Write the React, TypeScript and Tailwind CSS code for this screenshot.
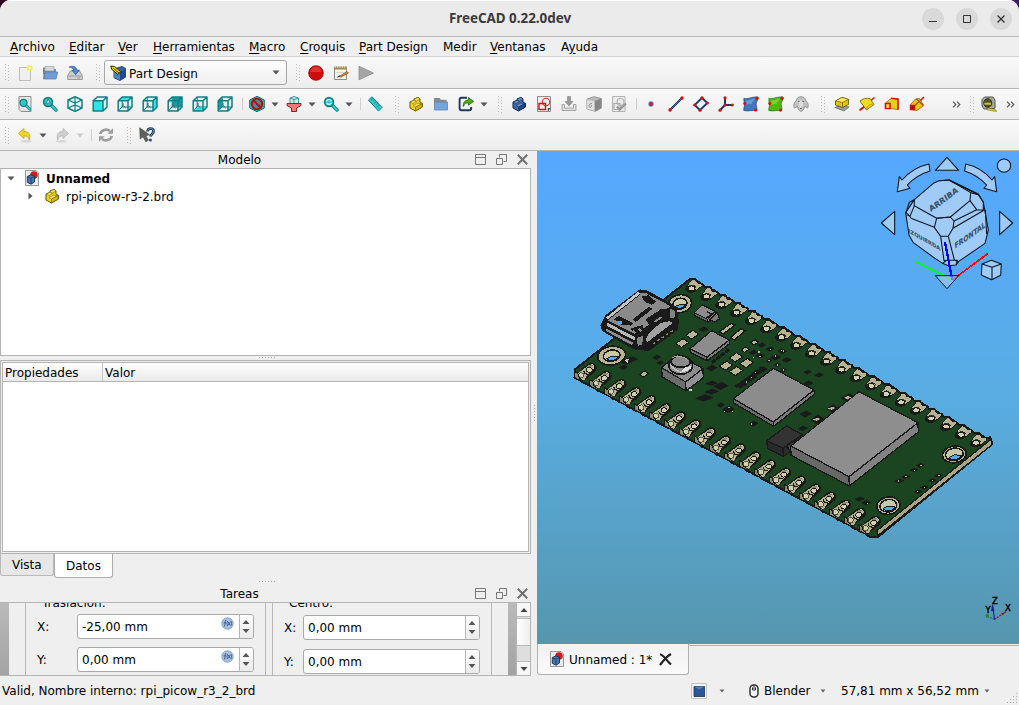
import React from "react";

const Svg = ({ children, w = 16, h = 16, vb = "0 0 16 16", className = "" }: { children: React.ReactNode; w?: number; h?: number; vb?: string; className?: string }) => (
  <svg width={w} height={h} viewBox={vb} className={"block shrink-0 " + className}>{children}</svg>
);

/* ---------- toolbar pieces ---------- */

const Dots = () => (
  <svg width="5" height="17" viewBox="0 0 5 17" className="block shrink-0" shapeRendering="crispEdges">
    {[0, 3, 6, 9, 12, 15].map((y) => (
      <g key={y} fill="#bdbdbd"><rect x="0" y={y} width="1" height="1" /><rect x="3" y={y + 1} width="1" height="1" /></g>
    ))}
  </svg>
);
const Handle = ({ className }: { className: string }) => <div className={"flex shrink-0 items-center " + className}><Dots /></div>;
const Tool = ({ children }: { children: React.ReactNode }) => <div className="flex w-[25px] shrink-0 items-center pl-[5px]">{children}</div>;
const Caret = ({ color = "#555" }: { color?: string }) => (
  <Svg w={8} h={5} vb="0 0 8 5"><path d="M.5 .5H7.5L4 4.5Z" fill={color} /></Svg>
);
const Drop = ({ color }: { color?: string }) => <div className="flex w-3 shrink-0 items-center pl-0.5"><Caret color={color} /></div>;
const Sep = ({ className = "w-[7px] pl-[5px]" }: { className?: string }) => (
  <div className={"shrink-0 " + className}><div className="h-3 w-px bg-[#cfcfcf]" /></div>
);
const More = ({ className }: { className: string }) => (
  <div className={"shrink-0 " + className}><Svg w={9} h={7} vb="0 0 9 7"><path d="M1 .7L3.8 3.5L1 6.3M5 .7L7.8 3.5L5 6.3" fill="none" stroke="#555" strokeWidth="1.2" /></Svg></div>
);

/* ---------- icons ---------- */

const NewFile = () => <Svg><path d="M2.5 2.5H13.5V15.5H2.5Z" fill="#efefef" stroke="#bdbdbd" /><circle cx="12.7" cy="3" r="3" fill="#f5ec5a" /><circle cx="12.7" cy="3" r="1.2" fill="#fffde0" /></Svg>;
const OpenFile = () => <Svg><path d="M1 2.5H6L7.5 4H14V9H1Z" fill="#8b8b8b" /><path d="M3 1.5H12V6H3Z" fill="#d8d8d8" stroke="#999" strokeWidth=".6" /><path d="M3 7H15.7L14 14H1.5Z" fill="#6f9fd2" stroke="#4a7ab5" strokeWidth=".7" /><path d="M2 5V13" stroke="#777" /></Svg>;
const SaveFile = () => <Svg><path d="M3.5 6H12.5L15.3 10.5V14.5H.7V10.5Z" fill="#cfcfcf" stroke="#8a8a8a" strokeWidth=".8" /><path d="M1.5 11H14.5M10 13H13" stroke="#999" /><path d="M2 2.2C5 .3 9.3 1 10 5H12.5L8.7 9.8L4.7 5.3H7C6.5 3.5 4.5 2.5 2 2.2Z" fill="#4f83c4" stroke="#2b5a97" strokeWidth=".6" /></Svg>;
const PartDesignIcon = () => <Svg><path d="M4 4L12 1.500L15.700 3.500V12L10 15.500L4 12.800Z" fill="#3366a8" stroke="#112a50" strokeWidth=".8" /><path d="M4 4.500L10 7V15.200L4 12.500Z" fill="#4b80c2" /><path d="M10 7L15.500 4V12L10 15.200Z" fill="#204a87" /><path d="M.8 1L4.500 1.500L10.500 6.500L8 9.500L1.800 4.500Z" fill="#e8d21b" stroke="#2f2b00" strokeWidth="1" /><path d="M3.200 3.200L9 8" stroke="#2f2b00" strokeWidth=".8" /></Svg>;
const Record = () => <Svg><circle cx="8" cy="8" r="7.3" fill="#cf0d0d" stroke="#8c0000" strokeWidth=".8" /><path d="M2.5 7A5.5 5.5 0 0 1 13.5 7Z" fill="#e33131" /></Svg>;
const MacroEdit = () => <Svg><path d="M1.5 2.5H13.5V14.5H1.5Z" fill="#f3f3ec" stroke="#8d8d85" /><path d="M1 1.5H14V4.5H1Z" fill="#9a8e5a" /><path d="M2 2H13" stroke="#e8e2c8" strokeDasharray="1 1.3" strokeWidth="1.5" /><path d="M3.5 7.5H11M3.5 12H9" stroke="#ccc" strokeWidth=".8" /><path d="M6 11.5L14 6.5L15.5 8L8 12Z" fill="#d68a3a" stroke="#6b4518" strokeWidth=".6" /><path d="M4.5 12.2L7 10.8" stroke="#222" /></Svg>;
const Play = () => <Svg><path d="M1 1.3L15.5 8L1 14.8Z" fill="#a5a5a5" stroke="#8d8d8d" strokeWidth=".8" /></Svg>;

const T = "#107f84";
const Lens = () => <g><path d="M9 9L14 14" stroke={T} strokeWidth="3.4" strokeLinecap="round" /><path d="M9 9L14 14" stroke="#2fd5d8" strokeWidth="1.7" strokeLinecap="round" /><circle cx="6" cy="6" r="4.4" fill="#2fc9cc" stroke={T} strokeWidth="1.6" /></g>;
const FitAll = () => <Svg><path d="M2 .5H14V15.5H4L2 13.5Z" fill="#e4e4e4" stroke="#8e8e8e" /><g transform="translate(1.7 2) scale(.8)"><Lens /></g></Svg>;
const FitSel = () => <Svg><Lens /><path d="M3.8 8L6.2 3.4L8.5 6.7Z" fill="#c5e5e6" stroke="#23696c" strokeWidth=".7" /></Svg>;
const ZoomBorder = () => <Svg><Lens /><path d="M3.3 5.3A2.8 2.8 0 0 1 8.5 5.2M8.6 6.7A2.8 2.8 0 0 1 3.6 7" fill="none" stroke="#dff" strokeWidth="1.1" /></Svg>;
const IsoCube = () => <Svg><path d="M8 .8L15 4V12L8 15.4L1 12V4Z" fill="#e9f4f4" stroke={T} strokeWidth="1.5" strokeLinejoin="round" /><path d="M1 4L8 7L15 4M8 7V15M1 12L8 9L15 12M8 1V7" fill="none" stroke={T} strokeWidth="1.2" /></Svg>;
const faces: Record<string, string> = {
  front: "M1.2 4.8H11V15H1.2Z",
  top: "M1.2 4.8L5.2 1H15L11 4.8Z",
  right: "M11 4.8L15 1V11L11 15Z",
  rear: "M5.2 1H15V11H5.2Z",
  bottom: "M1.2 15L5.2 11H15L11 15Z",
  left: "M1.2 4.8L5.2 1V11L1.2 15Z",
};
const ViewCube = ({ face }: { face: string }) => (
  <Svg>
    <path d="M1.2 4.8L5.2 1H15V11L11 15H1.2Z" fill="#e4efef" />
    {face !== "front" && <path d="M5.2 1V11H15M5.2 11L1.2 15" fill="none" stroke={T} strokeWidth="1" />}
    <path d={faces[face]} fill={face === "left" || face === "rear" ? "#169ca0" : "#30e2e4"} />
    <path d="M1.2 4.8H11V15H1.2ZM1.2 4.8L5.2 1H15V11L11 15M11 4.8L15 1" fill="none" stroke={T} strokeWidth="1.5" strokeLinejoin="round" />
    {face !== "front" && <path d="M3.500 12.500L6 9.500L8.700 12M6 9.500V7" fill="none" stroke="#2d6d70" strokeWidth="1" />}
  </Svg>
);
const DrawStyle = () => <Svg><path d="M8 .3L15.3 4V12L8 15.7L.7 12V4Z" fill="#26c6c9" stroke="#0e6d70" /><circle cx="8" cy="8" r="5.2" fill="#48686a" fillOpacity=".5" stroke="#b50d0d" strokeWidth="2" /><path d="M4.5 4.5L11.5 11.5" stroke="#b50d0d" strokeWidth="2.2" /></Svg>;
const Filter = () => <Svg><path d="M4 2L8 .5L12.500 2V7.500H4Z" fill="#c9eded" stroke="#3d9599" strokeWidth="1" /><path d="M4 2L8 3.500L12.500 2M8 3.500V7" fill="none" stroke="#3d9599" strokeWidth="1" /><path d="M1 7.500H15V9.500L10.500 12V15.500H5.500V12L1 9.500Z" fill="#f47878" stroke="#7d1717" strokeWidth=".9" /></Svg>;
const Ruler = () => <Svg><path d="M5 .800L15 11.500L11.500 15L1.500 4.200Z" fill="#29cbd0" stroke={T} /><path d="M5.800 2.500L4 4.200M7.500 4L6.300 5.200M9 5.800L7.300 7.500M10.700 7.300L9.500 8.500M12.300 9L10.500 10.800" stroke="#11676b" strokeWidth=".8" /></Svg>;

const PartShape = ({ a, b, c, s }: { a: string; b: string; c: string; s: string }) => (
  <Svg>
    <path d="M2 6L6 4.200V3L10 1.300L12 3V6L14.500 7.500V11L7.500 15L2 12Z" fill={b} stroke={s} strokeWidth="1" strokeLinejoin="round" />
    <path d="M2.300 6L6 4.300L8.300 5.700L5 7.500ZM6 3.200L10 1.500L12 3.200L8.300 5ZM5 9.500L9.500 7.300L14.200 7.500L7.500 11Z" fill={a} stroke={s} strokeWidth=".5" />
    <path d="M7.500 11L14.200 7.500V11L7.500 14.800Z" fill={c} stroke={s} strokeWidth=".6" />
  </Svg>
);
const YellowPart = () => <PartShape a="#fbea62" b="#eed01c" c="#d9b60e" s="#665a06" />;
const BluePart = () => <PartShape a="#6d9bd0" b="#3b6dab" c="#204a87" s="#11264a" />;
const Folder = () => <Svg><path d="M1 2H6.500L8 3.700H13.500V9H1Z" fill="#8a8a8a" /><path d="M1.500 6H14.500V14H1.500Z" fill="#74a5dc" stroke="#5a86bb" strokeWidth=".8" /></Svg>;
const LinkIcon = () => <Svg><path d="M9 1.800H3.500A2 2 0 0 0 1.600 3.800V12.400A2 2 0 0 0 3.500 14.300H11.300A2 2 0 0 0 13.200 12.400V11" fill="none" stroke="#1e3a5e" strokeWidth="1.900" /><path d="M5.300 10.500C5 6 7.500 4 10.500 4V1.500L15.500 5.400L10.500 9.200V6.800C8 6.800 6.500 7.500 5.300 10.500Z" fill="#4cb014" stroke="#245d06" strokeWidth=".8" /></Svg>;
const SketchIcon = () => <Svg><path d="M1.500 .500H14.500V15.500H1.500Z" fill="#f1f1f1" stroke="#8e8e8e" /><circle cx="10" cy="6" r="3.700" fill="none" stroke="#e32626" strokeWidth="1.100" /><path d="M3 7.500H9.500V13.500H3Z" fill="none" stroke="#d40f0f" strokeWidth="1.400" /><path d="M12 15V12.500H14.500" fill="#333" stroke="#333" strokeWidth=".6" /></Svg>;
const ImportIcon = () => <Svg><path d="M1 8.500V14.500H15V8.500H12.500V12H3.500V8.500Z" fill="#ddd" stroke="#a6a6a6" /><path d="M6.500 .500H9.500V5.500H12L8 10L4 5.500H6.500Z" fill="#999" stroke="#858585" strokeWidth=".6" /></Svg>;
const GreyBox = () => <Svg><path d="M1 3L8 .700L15.300 2.500V12L9.500 15.300L1 13Z" fill="#bdbdbd" stroke="#888" strokeWidth=".8" /><path d="M8.500 5L15.300 2.500V12L9 15.300Z" fill="#858585" /><path d="M1 3.500L8.500 5.200V15L1 13Z" fill="#e1e1e1" stroke="#aaa" strokeWidth=".6" strokeDasharray="1.5 1" /><path d="M6 7.500C3 6.500 2.500 11.500 4 11.500S6.500 9 4.500 9" fill="none" stroke="#8e8e8e" /></Svg>;
const GreySketch = () => <Svg><path d="M1.500 .500H14V15.500H1.500Z" fill="#ececec" stroke="#b2b2b2" /><circle cx="9.500" cy="6" r="3.600" fill="none" stroke="#aaa" /><path d="M3 7.500H9V13.500H3Z" fill="none" stroke="#aaa" strokeWidth="1.200" /><path d="M6 10.500L8.700 13.500L15 7.500" fill="none" stroke="#999" strokeWidth="2.400" /></Svg>;
const PointIcon = () => <Svg><circle cx="8" cy="8" r="2.700" fill="#6a7cb5" /><circle cx="8" cy="8" r="1.700" fill="#d0162a" /></Svg>;
const red = "#d41212";
const LineIcon = () => <Svg><path d="M2 14L14 2" stroke="#16335c" strokeWidth="2.200" /><path d="M2 14L14 2" stroke="#4674ad" strokeWidth=".8" /><circle cx="2" cy="14" r="1.700" fill={red} /><circle cx="14" cy="2" r="1.700" fill={red} /></Svg>;
const PlaneIcon = () => <Svg><path d="M9 1.800L14.300 7L7 14.200L1.700 9Z" fill="#edf1f5" stroke="#173a68" strokeWidth="1.900" /><g fill={red}><circle cx="9" cy="1.800" r="1.600" /><circle cx="14.300" cy="7" r="1.600" /><circle cx="7" cy="14.200" r="1.600" /><circle cx="1.700" cy="9" r="1.600" /></g></Svg>;
const AxesIcon = () => <Svg><path d="M7 1.800V9L14.300 9M7 9L2 14.200" fill="none" stroke="#173a68" strokeWidth="2" /><g fill={red}><circle cx="7" cy="1.800" r="1.600" /><circle cx="14.300" cy="9" r="1.600" /><circle cx="7" cy="9" r="1.500" /><circle cx="2" cy="14.200" r="1.600" /></g></Svg>;
const Blob = ({ c, s, l }: { c: string; s: string; l: string }) => <Svg><path d="M.800 2.500C5 3.500 8 .5 15 1C15.300 5 12.500 6 13.200 9C13.500 11 14.500 12.500 13.300 15C9.500 13.500 5 15.800 .800 14.500C.500 11.500 2.200 10 1.200 7.500Z" fill={c} stroke={s} strokeWidth=".7" /><path d="M3 4.500C7 5 9 2.500 13 2.500C11 4.500 9 5 8.500 8C7 7.500 5 8 3.500 9Z" fill={l} opacity=".5" /><g fill={red}><circle cx="14" cy="2.200" r="1.700" /><circle cx="1.800" cy="7.500" r="1.500" /><circle cx="12.600" cy="14" r="1.600" /></g></Svg>;
const Sheep = () => <Svg><path d="M8 .800C12 .800 12.300 3.500 13 5C15.500 7 15.500 10 14.800 12L11.500 10.500C11 13.500 9.500 15.300 8 15.300S5 13.500 4.500 10.500L1.200 12C.500 10 .500 7 3 5C3.700 3.500 4 .800 8 .800Z" fill="#c2c2c2" stroke="#8f8f8f" strokeWidth=".9" /><path d="M5 5.500H7M9 5.500H11M7 12.500H9" stroke="#777" /><ellipse cx="8" cy="8" rx="2" ry="3.500" fill="#dedede" /></Svg>;
const Pad = () => <Svg><path d="M.800 11.500L6 9.500L15.200 11L10 15Z" fill="#9a9d9f" stroke="#606567" strokeWidth=".7" /><path d="M1.500 5L8 1.300L14.500 3.500V8.500L8.500 11.500L1.500 9Z" fill="#e2c40e" stroke="#5d5003" strokeWidth=".8" /><path d="M1.500 5L8 1.300L14.500 3.500L8.500 6.500Z" fill="#fbe855" stroke="#5d5003" strokeWidth=".6" /><path d="M8.500 6.500V11.500" stroke="#5d5003" strokeWidth=".7" /></Svg>;
const Revolve = () => <Svg><path d="M.500 14.500L15.500 1.500" stroke={red} strokeWidth="1.500" /><path d="M1 5C4 2.500 7 2 11 2.500L15 8.500C14 9.500 12 10.500 7.500 14Z" fill="#f4d91c" stroke="#6e5d04" strokeWidth=".8" /><path d="M7.500 13.500C8 9.500 11.500 7.500 15 8.500" fill="none" stroke="#b49406" /><path d="M1 14L5 11" stroke={red} strokeWidth="1.800" /></Svg>;
const Loft = () => <Svg><path d="M1.500 7L7 2.500H14V13.500L6.500 12.500Z" fill="#edcf1b" stroke="#6e5d04" strokeWidth=".7" /><path d="M7 2.300L14 3.200V13.800" fill="none" stroke={red} strokeWidth="1.500" /><path d="M1.500 7.500H6V12.500H1.500Z" fill="#f7e24a" stroke={red} strokeWidth="1.600" /></Svg>;
const Sweep = () => <Svg><path d="M1.500 8.500L6.500 3L10.500 2.500L14.800 9.500L8 14.500L1.500 13.500Z" fill="#edc41b" stroke="#6b5903" strokeWidth=".7" /><path d="M7 3L10 5L14 9.500M6 9.500L10.500 5" fill="none" stroke="#9a5b03" strokeWidth="1.200" /><path d="M1.500 9.500H5.500V13.500H1.500Z" fill="#8c1111" stroke={red} strokeWidth="1.400" /><path d="M11.500 4.500L15 1" stroke={red} strokeWidth="1.600" /></Svg>;
const Tape = () => <Svg><path d="M1 3.500L3.500 1H12L14 4V12L11 13H3L1 10Z" fill="#a7a9a4" stroke="#53554f" /><ellipse cx="6.800" cy="7" rx="4" ry="4.300" fill="#55521e" stroke="#2e2f25" /><path d="M3.300 6.800H10V8.800H3.500Z" fill="#cfc038" /><path d="M7 12L14.800 13.700L15.500 15.500L12 15L6 13.700Z" fill="#ded336" stroke="#625c08" strokeWidth=".5" /></Svg>;
const Undo = ({ flip = false }: { flip?: boolean }) => <Svg><g transform={flip ? "translate(16 0) scale(-1 1)" : ""}><ellipse cx="9" cy="14.300" rx="5.500" ry="1.200" fill="#000" opacity=".1" /><path d="M1.500 6.500L7 1.500V4.500C11.500 4.500 14 7 12.300 13C11.500 9.800 10 8.800 7 8.800V11.500Z" fill={flip ? "#cfcfcf" : "#f0d62b"} stroke={flip ? "#b5b5b5" : "#c3a409"} strokeWidth=".8" /></g></Svg>;
const Refresh = () => <Svg><path d="M2.200 7A6 5.500 0 0 1 12 4" fill="none" stroke="#9d9d9d" strokeWidth="2.600" /><path d="M9.500 6.800H15V1.300Z" fill="#9d9d9d" /><path d="M13.800 9A6 5.500 0 0 1 4 12" fill="none" stroke="#9d9d9d" strokeWidth="2.600" /><path d="M6.500 9.200H1V14.700Z" fill="#9d9d9d" /></Svg>;
const WhatsThis = () => <Svg><path d="M8.500 4.500C8.700 .500 15 .500 14.500 4.500C14.200 7 11.800 7 11.500 9.500" fill="none" stroke="#223f68" strokeWidth="2.700" /><path d="M8.500 4.500C8.700 .500 15 .500 14.500 4.500C14.200 7 11.800 7 11.500 9.500" fill="none" stroke="#698bb8" strokeWidth="1" /><circle cx="11.400" cy="13" r="1.600" fill="#315684" /><path d="M.700 .700L1.200 12L4 9.800L6.800 14.700L9.300 13.300L6.800 8.700L10.500 7.800Z" fill="#5e625e" stroke="#414441" strokeWidth=".6" /></Svg>;
const DocIcon = () => <Svg><path d="M1.500 .500H12L14.500 3V15.500H1.500Z" fill="#ececec" stroke="#989898" /><circle cx="10" cy="5" r="3.800" fill="#d21c1c" /><path d="M3.300 6.500L7 4.800L10.500 6.300V12L7 14.200L3.300 12.300Z" fill="#4a76ae" stroke="#15305a" strokeWidth=".9" /><path d="M3.300 6.800L7 8.300L10.500 6.500M7 8.300V14" fill="none" stroke="#15305a" strokeWidth=".7" /></Svg>;
const DockBtns = () => (
  <div className="flex items-center gap-[10px]">
    <Svg w={11} h={11} vb="0 0 11 11"><path d="M.500 .500H10.500V10.500H.500ZM.500 3.500H10.500" fill="none" stroke="#777" /></Svg>
    <Svg w={11} h={11} vb="0 0 11 11"><path d="M3.500 3.500V.500H10.500V7.500H7.500M.500 4.500H6.500V10.500H.500Z" fill="none" stroke="#777" /></Svg>
    <Svg w={11} h={11} vb="0 0 11 11"><path d="M.800 .800L10.200 10.200M10.200 .800L.800 10.200" fill="none" stroke="#6f6f6f" strokeWidth="2" /></Svg>
  </div>
);

/* ---------- 3D scene: circuit board ---------- */

const K = "#1a1a1a", G = "#1b4521", B = "#b8b393", L = "#d2d2ae";
const idx = Array.from({ length: 20 }, (_, i) => i);
const topC = idx.map((i) => [380 + i * 44.9, 52 + i * 24.4]);
const botC = idx.map((i) => [72 + i * 44.9, 299 + i * 24.15]);
const outline = [
  [30, 298], [375, 27],
  ...topC.flatMap(([x, y]) => [[x - 6, y - 26], [x + 10, y - 26], [x + 19, y - 14], [x + 31, y - 11]]),
  [1276, 502], [1282, 522], [940, 800],
  ...[...botC].reverse().flatMap(([x, y]) => [[x - 6, y + 44], [x - 20, y + 38], [x - 26, y + 32], [x - 44, y + 24]]),
  [30, 318],
].map((p) => p.join(",")).join(" ");
const rot = (n: number[][]) => n.map((p) => p.join(",")).join(" ");

const Slab = ({ p, d, top = "#8c8c8c", l = "#6d6d6d", r = "#7d7d7d" }: { p: number[][]; d: number; top?: string; l?: string; r?: string }) => {
  const dn = (q: number[]) => [q[0] + 1, q[1] + d];
  return (
    <g stroke={K} strokeWidth="4" strokeLinejoin="round">
      <polygon points={rot([p[3], p[2], dn(p[2]), dn(p[3])])} fill={l} />
      <polygon points={rot([p[2], p[1], dn(p[1]), dn(p[2])])} fill={r} />
      <polygon points={rot(p)} fill={top} />
    </g>
  );
};
const Hole = ({ x, y, rx, ry, k }: { x: number; y: number; rx: number; ry: number; k: number }) => (
  <g transform={`rotate(-8 ${x} ${y})`}>
    <ellipse cx={x} cy={y} rx={rx} ry={ry} fill={B} stroke={K} strokeWidth="5" />
    <ellipse cx={x} cy={y} rx={rx * k} ry={ry * k} fill="#c9c8a6" stroke={K} strokeWidth="4.5" />
    <path d={`M${x - rx * k * 0.7} ${y + ry * k * 0.4}Q${x} ${y - ry * k * 0.15} ${x + rx * k * 0.8} ${y + ry * k * 0.3}Q${x} ${y + ry * k * 1.4} ${x - rx * k * 0.7} ${y + ry * k * 0.4}Z`} fill="#58a9e4" stroke={K} strokeWidth="3" />
  </g>
);
const flatPads: number[][] = [
  [382, 194, 20, 13], [352, 219, 20, 13], [513, 262, 20, 14], [545, 279, 20, 14], [483, 287, 20, 14], [513, 303, 20, 14],
  [568, 217, 12, 8], [540, 239, 12, 8], [237, 312, 13, 9],
];
const specks: number[][] = [
  [415, 178, 14, 7], [590, 225, 12, 7], [615, 237, 12, 7], [650, 243, 12, 7], [585, 257, 14, 7], [632, 262, 16, 9], [665, 270, 14, 7],
  [612, 272, 9, 6], [637, 284, 9, 6], [655, 300, 9, 6], [565, 247, 12, 7], [275, 262, 12, 7], [285, 278, 10, 6], [440, 294, 16, 9],
  [440, 340, 18, 7], [468, 348, 22, 11], [440, 365, 20, 8], [418, 384, 26, 10], [467, 405, 11, 7], [490, 418, 18, 10], [566, 461, 13, 8],
  [528, 345, 18, 9], [545, 333, 16, 8], [560, 322, 16, 9], [575, 308, 16, 9], [595, 298, 12, 8], [185, 275, 18, 9], [200, 268, 18, 8], [175, 292, 12, 7],
  [728, 306, 12, 6], [762, 315, 14, 6], [730, 340, 14, 7], [722, 432, 18, 9], [714, 475, 14, 7],
  [655, 245, 10, 6], [850, 383, 22, 12], [802, 415, 17, 12], [757, 448, 20, 14], [884, 687, 14, 6], [904, 698, 14, 7],
  [1003, 633, 14, 6], [1022, 620, 12, 6], [1047, 600, 12, 6], [1066, 586, 12, 6], [1060, 665, 12, 6], [1078, 652, 12, 6], [1103, 631, 12, 6], [1120, 617, 12, 6],
];
const glints: number[][] = [
  [617, 238], [650, 241], [632, 258], [612, 272], [582, 246], [566, 262], [585, 259], [637, 285], [655, 300], [478, 425], [492, 412], [502, 424], [560, 462],
  [572, 308], [560, 322], [545, 336], [1001, 633], [1023, 619], [1049, 601], [1068, 586], [1058, 665], [1079, 652], [1102, 631], [1122, 616], [655, 243], [428, 158], [907, 700],
];
const quad = ([x, y, w, h]: number[], s = 1) => rot([[x - w * s, y + h * 0.1 * s], [x + w * 0.1 * s, y - h * s], [x + w * s, y - h * 0.1 * s], [x - w * 0.1 * s, y + h * s]]);

const Board = () => (
  <g transform="translate(565 270) scale(.33333)" shapeRendering="crispEdges">
    <polygon points={outline} fill={G} stroke={K} strokeWidth="6" strokeLinejoin="round" />
    <polygon points="1278,508 1281,524 938,797 936,782" fill="#a9a585" stroke={K} strokeWidth="4" />
    {topC.map(([x, y], i) => (
      <g key={i} transform={`translate(${x} ${y})`}>
        <ellipse cx="0" cy="3" rx="20" ry="13" fill={K} transform="rotate(-12)" />
        <path d="M-14 -4L2 -24L12 -22L17 -13L30 -12L32 -5L14 9Z" fill={B} stroke={K} strokeWidth="3" />
        <path d="M12 -22L17 -13L30 -12L22 -20Z" fill={K} />
        <path d="M-14 2Q0 -14 14 0Z" fill={B} stroke={K} strokeWidth="2.5" />
        <ellipse cx="0" cy="3" rx="10" ry="7.500" fill={L} stroke={K} strokeWidth="3" />
      </g>
    ))}
    {botC.map(([x, y], i) => (
      <g key={i} transform={`translate(${x} ${y})`}>
        <path d="M-43 6L-19 20V36L-42 25Z" fill="#8b8870" stroke={K} strokeWidth="3.500" />
        <path d="M-18 15L7 -5" stroke={K} strokeWidth="32" strokeLinecap="round" />
        <path d="M-35 10L-18 -2L8 6L-6 20L-14 34L-24 30V20Z" fill={B} stroke={K} strokeWidth="2.500" />
        <path d="M-14 6L8 -8" stroke={B} strokeWidth="16" strokeLinecap="round" />
        <path d="M-8 -8Q2 -18 12 -12L4 -4Z" fill="#8b8870" />
        <ellipse cx="1" cy="1" rx="9" ry="7.500" fill={L} stroke={K} strokeWidth="3" />
        <path d="M-16 3L-12 12L-1 14" stroke={K} strokeWidth="3.500" fill="none" />
        <ellipse cx="-23" cy="17" rx="8" ry="8" fill={L} stroke={K} strokeWidth="2" />
      </g>
    ))}
    <Hole x={140} y={257} rx={42} ry={28} k={0.6} />
    <Hole x={345} y={101} rx={35} ry={27} k={0.6} />
    <Hole x={1168} y={553} rx={36} ry={25} k={0.74} />
    <Hole x={970} y={707} rx={35} ry={26} k={0.72} />
    {flatPads.map((p, i) => <polygon key={i} points={quad(p)} fill={B} stroke={K} strokeWidth="3.500" />)}
    <polygon points="463,185 498,160 510,165 475,192" fill={B} stroke={K} strokeWidth="4" />
    <polygon points="495,204 528,176 541,182 508,210" fill={B} stroke={K} strokeWidth="4" />
    {specks.map((p, i) => <polygon key={i} points={quad(p)} fill={K} stroke={K} strokeWidth="2" strokeLinejoin="round" />)}
    {glints.map(([x, y], i) => <rect key={i} x={x - 2} y={y - 2} width="4" height="4" fill="#b5b292" />)}
    {[[850, 383], [802, 415], [757, 448]].map((p, i) => <polygon key={i} points={quad([p[0] - 2, p[1], 13, 6])} fill={B} stroke={K} strokeWidth="2" />)}
    <path d="M512 352L592 290" stroke={K} strokeWidth="7" strokeDasharray="10 5" />
    <path d="M440 278L492 238" stroke={K} strokeWidth="10" strokeDasharray="14 3" />

    {/* USB connector */}
    <path d="M225 60L246 63L333 112L340 155L336 178L250 241L205 236L114 182L108 166L122 138Z" fill={K} stroke={K} strokeWidth="4" />
    <path d="M222 68L240 68L316 108L232 180L205 190L126 150Z" fill="#8a8a8a" />
    <path d="M124 142L218 66L226 70L130 150Z" fill="#c4c4c4" />
    <path d="M126 156L212 201L209 213L124 168Z" fill="#b7b7b7" stroke={K} strokeWidth="3" />
    <path d="M122 173L205 217L203 228L120 183Z" fill="#8d8d8d" stroke={K} strokeWidth="3" />
    <path d="M130 148L224 74" stroke={K} strokeWidth="3" />
    <path d="M203 148L252 110L262 117L212 156ZM145 148L162 138L206 160L198 168ZM230 80L250 76L274 96L260 104L240 96ZM242 148L290 116L312 118L252 165ZM196 176L232 165L240 185L214 198Z" fill={K} />
    <path d="M252 138L262 131M226 160L238 152M268 156L290 141M204 182L212 190M222 176L230 184M270 126L282 118" stroke="#8a8a8a" strokeWidth="6" />
    <path d="M155 152L178 152L186 164L170 164Z" fill={K} />
    <rect x="158" y="154" width="14" height="7" fill="#58a9e4" />
    <path d="M240 212Q246 184 288 158Q322 146 324 160L262 206L248 218Z" fill="#a0a0a0" stroke={K} strokeWidth="3" />
    <path d="M316 116L330 123L328 146L314 142ZM216 204L234 198L232 224L218 228Z" fill="#838383" />
    <path d="M262 230L328 184" stroke={K} strokeWidth="9" strokeDasharray="7 7" />
    <path d="M264 222L326 180" stroke="#8c8969" strokeWidth="4" strokeDasharray="8 8" />
    <path d="M180 270L192 266L188 280Z" fill="#c9c9c9" />

    <Slab p={[[412, 104], [450, 124], [428, 148], [388, 128]]} d={9} />
    <path d="M434 150L456 128L464 146L450 156Z" fill="#7a7a7a" stroke={K} strokeWidth="4" />
    <path d="M426 126L440 132L424 144" fill="none" stroke={K} strokeWidth="4" />
    <Slab p={[[440, 182], [493, 210], [425, 262], [375, 236]]} d={11} />

    {/* push button */}
    <Slab p={[[338, 252], [414, 296], [362, 336], [290, 293]]} d={27} r="#929292" />
    <ellipse cx="347" cy="286" rx="36" ry="27" fill="#8c8c8c" stroke={K} strokeWidth="5" />
    <path d="M345 308Q378 304 380 288L360 292Z" fill="#dedede" />
    <path d="M316 282Q326 304 352 306" fill="none" stroke="#b8b8b8" strokeWidth="5" />
    <ellipse cx="347" cy="275" rx="29" ry="17" fill="#8a8a8a" stroke={K} strokeWidth="5" />
    <path d="M322 262Q350 252 370 272" fill="none" stroke="#a8a8a8" strokeWidth="3" />
    <rect x="372" y="356" width="9" height="6" fill={L} />

    <Slab p={[[625, 295], [747, 360], [625, 456], [505, 386]]} d={13} />
    <Slab p={[[664, 468], [712, 494], [654, 535], [606, 512]]} d={24} top="#333" l="#2a2a2a" r="#2d2d2d" />
    <path d="M664 528L690 510L694 526L674 540Z" fill="#444" stroke={K} strokeWidth="5" />
    <Slab p={[[882, 365], [1059, 458], [852, 620], [677, 528]]} d={28} top="#8e8e8e" l="#686868" r="#828282" />
  </g>
);

const NavCube = () => (
  <g transform="translate(870 150) scale(.33333)">
    <g fill="#a0cbf6" stroke="#0a1420" strokeWidth="3.200" strokeLinejoin="round">
      <polygon points="231,22 266,61 196,61" />
      <polygon points="74,184 74,254 34,219" />
      <polygon points="389,184 389,254 428,219" />
      <circle cx="402" cy="47" r="20" />
      <path d="M177 42L180 63Q140 75 112 105L120 115L82 125L88 80L96 90Q130 52 177 42Z" />
      <path d="M287 42L284 63Q322 75 350 105L342 115L380 125L374 80L366 90Q334 52 287 42Z" />
      <path d="M207 92L238 90L325 132L340 157L355 240L345 280L265 335L258 345L235 347L218 340L195 325L130 278L117 255L107 188L133 149L190 100Z" />
      <g fill="none">
        <path d="M207 92L238 90L302 128L300 152L241 201L200 205L133 167V149" />
        <path d="M200 205L241 201L252 213L249 235L235 259L212 259L193 232Z" />
        <path d="M133 149L118 157L108 188L120 199L133 167M120 199L123 205L193 232M112 195L120 199" />
        <path d="M302 128L325 134L340 157V180L320 179L300 152M252 213L320 179M249 235L343 180" />
        <path d="M212 259L222 332L240 330M235 259L253 330L266 335M218 340L230 331H262L258 345M240 92L325 134M346 180L350 252" />
      </g>
      <polygon points="336,342 364,331 394,342 392,376 365,389 334,375" />
      <path d="M336,342L366,352L394,342M366,352V388" fill="none" />
    </g>
    <g fill="#2c4257" stroke="#2c4257" strokeWidth=".4" fillOpacity=".9" fontFamily="DejaVu Sans" fontWeight="bold" textAnchor="middle">
      <text transform="matrix(.85 -.62 .45 .85 224 156)" fontSize="24" textLength="98" lengthAdjust="spacingAndGlyphs">ARRIBA</text>
      <text transform="matrix(.88 .5 .1 .9 164 275)" fontSize="19" textLength="108" lengthAdjust="spacingAndGlyphs">IZQUIERDA</text>
      <text transform="matrix(.85 -.6 .1 1 301 264)" fontSize="23" textLength="108" lengthAdjust="spacingAndGlyphs">FRONTAL</text>
    </g>
    <g shapeRendering="crispEdges" strokeWidth="5" fill="none">
      <path d="M138 335L247 390" stroke="#00ff00" />
      <path d="M247 390L353 311" stroke="#ff0000" />
      <path d="M225 277L247 391" stroke="#0000ff" strokeWidth="7" />
    </g>
    <polygon points="196,377 266,377 231,416" fill="#a0cbf6" fillOpacity=".6" stroke="#0a1420" strokeWidth="3" />
  </g>
);

const MiniAxes = () => (
  <g>
    <g fill="none" strokeWidth="1.200">
      <path d="M994.500 619.500L987 616" stroke="#1f7f32" strokeDasharray="2 1" /><path d="M994.500 619.500L1006 611.500" stroke="#8b1c1c" strokeDasharray="2 1" /><path d="M994.500 619.500L992.500 605" stroke="#20209a" />
      <path d="M992.300 604L994.500 611H991Z" fill="#20209a" /><path d="M1005 612L1003 615.500L1001 613.500Z" fill="#8b1c1c" /><path d="M985.500 614.500H989V617.500H986Z" fill="#1f7f32" />
    </g>
    <g fontFamily="DejaVu Sans" fontSize="8.500" fill="#000" stroke="#000" strokeWidth=".4"><text x="992" y="603.500">Z</text><text x="985.500" y="613">Y</text><text x="1005" y="610.500">X</text></g>
  </g>
);

/* ---------- panels ---------- */

const menus: [string, string, string, string][] = [
  ["", "A", "rchivo", "w-[59px]"], ["", "E", "ditar", "w-[49px]"], ["", "V", "er", "w-[35px]"], ["", "H", "erramientas", "w-[96px]"],
  ["", "M", "acro", "w-[51px]"], ["", "C", "roquis", "w-[59px]"], ["", "P", "art Design", "w-[84px]"], ["Medir", "", "", "w-[47px]"],
  ["", "V", "entanas", "w-[71px]"], ["A", "y", "uda", "w-[50px]"],
];
const bar = "flex items-center bg-gradient-to-b from-[#f9f9f9] to-[#ededed] border-b border-[#b5b5b5] shrink-0";
const WinBtn = ({ children }: { children: React.ReactNode }) => <div className="flex size-[22px] items-center justify-center rounded-full bg-[#d9d9d9]">{children}</div>;
const HDots = ({ className = "" }: { className?: string }) => (
  <svg width="16" height="2" className={"block " + className} shapeRendering="crispEdges">{[0, 3, 6, 9, 12, 15].map((x) => <rect key={x} x={x} y="0" width="1" height="1" fill="#aaa" />)}</svg>
);
const DockTitle = ({ title }: { title: string }) => (
  <div className="flex h-[17px] shrink-0 items-center pr-[3px]">
    <div className="w-[475px] pl-1 text-center leading-4">{title}</div>
    <DockBtns />
  </div>
);
const Spin = ({ v, fx = false }: { v: string; fx?: boolean }) => (
  <div className="flex h-[25px] w-[177px] overflow-hidden rounded-[3px] border border-[#a9a9a9] bg-white">
    <div className="flex flex-1 items-center pl-1">{v}</div>
    {fx && (
      <div className="pt-[2px] pr-[5px]">
        <Svg w={13} h={13} vb="0 0 13 13"><circle cx="6.500" cy="6.500" r="5.700" fill="#a9c0de" stroke="#7d94b4" strokeWidth=".8" /><path d="M5.200 3.300C4 3 4.200 5 3.600 9.500M2.600 5.800H5M6.500 4Q5.300 6.500 6.500 9M7.300 5L9 8.200M9.200 5L7.200 8.200M10 4Q11 6.500 10 9" stroke="#33598f" strokeWidth=".9" fill="none" /></Svg>
      </div>
    )}
    <div className="flex w-[14px] flex-col items-center justify-center gap-[5px] border-l border-[#b5b5b5] bg-gradient-to-b from-white to-[#ebebeb] pr-px">
      <Svg w={8} h={4} vb="0 0 8 4"><path d="M4 0L7.500 4H.5Z" fill="#555" /></Svg>
      <Svg w={8} h={4} vb="0 0 8 4"><path d="M4 4L7.500 0H.5Z" fill="#555" /></Svg>
    </div>
  </div>
);

export default function App() {
  return (
    <div className="h-[705px] w-[1019px] overflow-hidden bg-gradient-to-r from-[#30061f] to-[#3a1f5e] text-[12px] text-black font-['DejaVu_Sans',sans-serif]">
      <div className="flex h-full flex-col overflow-hidden rounded-t-[11px] bg-[#efefef]">
        <header className="flex h-[37px] shrink-0 items-center border-t border-b border-t-white border-b-[#b9b9b9] bg-[#ebebeb]">
          <div className="w-[922px] pl-[98px] text-center text-[13.4px] font-bold text-[#3a3a3a] font-['Noto_Sans',sans-serif]">FreeCAD 0.22.0dev</div>
          <div className="flex gap-3">
            <WinBtn><Svg w={10} h={10} vb="0 0 10 10"><path d="M1 7.500H9" stroke="#333" /></Svg></WinBtn>
            <WinBtn><Svg w={10} h={10} vb="0 0 10 10"><path d="M1.500 1.500H8.500V8.500H1.500Z" fill="none" stroke="#333" /></Svg></WinBtn>
            <WinBtn><Svg w={10} h={10} vb="0 0 10 10"><path d="M1.500 1.500L8.500 8.500M8.500 1.500L1.500 8.500" stroke="#333" strokeWidth="1.300" /></Svg></WinBtn>
          </div>
        </header>

        <nav className="flex h-5 shrink-0 items-center border-b border-[#d0d0d0] pl-[10px]">
          {menus.map(([a, u, b, w], i) => (
            <div key={i} className={"shrink-0 whitespace-nowrap " + w}>{a}<span className="underline underline-offset-2">{u}</span>{b}</div>
          ))}
        </nav>

        <div className={bar + " h-8"}>
          <Handle className="w-3 pl-[5px]" />
          <Tool><NewFile /></Tool><Tool><OpenFile /></Tool><Tool><SaveFile /></Tool>
          <Handle className="w-[17px] pl-[9px]" />
          <div className="flex h-[25px] w-[183px] items-center rounded-[3px] border border-[#a6a6a6] bg-gradient-to-b from-[#fdfdfd] to-[#efefef] pl-[5px]">
            <PartDesignIcon /><span className="w-[146px] pt-0.5 pl-[3px]">Part Design</span><Caret />
          </div>
          <Handle className="w-4 pl-[9px]" />
          <Tool><Record /></Tool><Tool><MacroEdit /></Tool><Tool><Play /></Tool>
        </div>

        <div className={bar + " h-[31px]"}>
          <Handle className="w-3 pl-[5px]" />
          <Tool><FitAll /></Tool><Tool><FitSel /></Tool><Tool><IsoCube /></Tool>
          {["front", "top", "right", "rear", "bottom", "left"].map((f) => <Tool key={f}><ViewCube face={f} /></Tool>)}
          <Sep /><Tool><DrawStyle /></Tool><Drop /><Tool><Filter /></Tool><Drop /><Tool><ZoomBorder /></Tool><Drop />
          <Sep /><Tool><Ruler /></Tool>
          <Handle className="w-4 pl-2" />
          <Tool><YellowPart /></Tool><Tool><Folder /></Tool><Tool><LinkIcon /></Tool><Drop />
          <Handle className="w-4 pl-2" />
          <Tool><BluePart /></Tool><Tool><SketchIcon /></Tool><Tool><ImportIcon /></Tool><Tool><GreyBox /></Tool><Tool><GreySketch /></Tool>
          <Sep /><Tool><PointIcon /></Tool><Tool><LineIcon /></Tool><Tool><PlaneIcon /></Tool><Tool><AxesIcon /></Tool>
          <Tool><Blob c="#3f78bd" s="#1c4174" l="#a0c2e8" /></Tool><Tool><Blob c="#52b80e" s="#2b6407" l="#a4ee4e" /></Tool><Tool><Sheep /></Tool>
          <Handle className="w-4 pl-2" />
          <Tool><Pad /></Tool><Tool><Revolve /></Tool><Tool><Loft /></Tool><Tool><Sweep /></Tool>
          <More className="w-[39px] pl-[23px]" />
          <Handle className="w-2 pl-[2px]" />
          <Tool><Tape /></Tool><More className="pl-[5px]" />
        </div>

        <div className={bar + " h-[31px]"}>
          <Handle className="w-3 pl-[5px]" />
          <Tool><Undo /></Tool><Drop /><Tool><Undo flip /></Tool><Drop color="#cdcdcd" /><Sep />
          <Tool><Refresh /></Tool><Handle className="w-4 pl-[9px]" /><Tool><WhatsThis /></Tool>
        </div>

        <div className="flex h-[524px] shrink-0">
          <aside className="flex w-[531px] shrink-0 flex-col">
            <DockTitle title="Modelo" />
            <div className="h-[188px] shrink-0 border border-[#b4b4b4] bg-white">
              <div className="flex h-[18px] items-center pl-[6px]"><Caret /><div className="pl-[9px]"><DocIcon /></div><b className="pt-0.5 pl-[6px] leading-4">Unnamed</b></div>
              <div className="flex h-[18px] items-center pl-[27px]">
                <Svg w={5} h={8} vb="0 0 5 8"><path d="M.5 .5L4.500 4L.5 7.500Z" fill="#555" /></Svg>
                <div className="pl-[11px]"><YellowPart /></div><span className="pt-0.5 pl-[6px] leading-4">rpi-picow-r3-2.brd</span>
              </div>
            </div>
            <HDots className="mt-px ml-[259px] shrink-0" />
            <div className="mt-px h-[194px] shrink-0 border border-[#b4b4b4] p-px">
              <div className="h-full border border-[#b4b4b4] bg-white">
                <div className="flex h-[19px] items-center border-b border-[#b4b4b4] bg-gradient-to-b from-white to-[#e9e9e9]">
                  <div className="flex h-full w-[100px] items-center border-r border-[#c8c8c8] pt-0.5 pl-[2px]">Propiedades</div><div className="pt-0.5 pl-[2px]">Valor</div>
                </div>
              </div>
            </div>
            <div className="flex h-[24px] shrink-0">
              <div className="flex h-[22px] w-[54px] items-center rounded-b-[3px] border border-t-0 border-[#b9b9b9] bg-[#e7e7e7] pl-[11px]">Vista</div>
              <div className="flex h-[24px] w-[59px] items-center rounded-b-[3px] border border-t-0 border-[#adadad] bg-white pl-[11px] pt-px">Datos</div>
            </div>
            <HDots className="mt-[3px] ml-[259px] shrink-0" />
            <div className="mt-[2px]"><DockTitle title="Tareas" /></div>
            <div className="flex h-[74px] shrink-0 overflow-hidden border-y border-[#b4b4b4]">
              <div className="w-[9px] bg-gradient-to-b from-[#bababa] to-[#a3a3a3]" />
              <div className="ml-4 w-[241px] border-x border-[#b9b9b9] pl-[11px]">
                <div className="-mt-[7px] h-[18px] pl-[5px] leading-[14px]">Traslación:</div>
                <div className="flex items-center"><span className="w-[40px]">X:</span><Spin v="-25,00 mm" fx /></div>
                <div className="mt-2 flex items-center"><span className="w-[40px]">Y:</span><Spin v="0,00 mm" fx /></div>
              </div>
              <div className="ml-[6px] w-[220px] border-x border-[#b9b9b9] pl-[11px]">
                <div className="-mt-[7px] h-[19px] pl-[5px] leading-[14px]">Centro:</div>
                <div className="flex items-center"><span className="w-[19px]">X:</span><Spin v="0,00 mm" /></div>
                <div className="mt-[9px] flex items-center"><span className="w-[19px]">Y:</span><Spin v="0,00 mm" /></div>
              </div>
              <div className="ml-4 w-2 bg-gradient-to-b from-[#bababa] to-[#a3a3a3]" />
              <div className="flex w-[15px] flex-col border-r border-l border-[#b4b4b4] bg-[#dedede]">
                <div className="flex h-[14px] items-center justify-center border-b border-[#b9b9b9] bg-[#f7f7f7]"><Svg w={8} h={4} vb="0 0 8 4"><path d="M4 0L7.500 4H.5Z" fill="#444" /></Svg></div>
                <div className="mt-px h-[28px] border-y border-[#b9b9b9] bg-gradient-to-r from-white to-[#efefef]" />
                <div className="mt-auto flex h-[14px] items-center justify-center border-t border-[#b9b9b9] bg-[#f7f7f7]"><Svg w={8} h={4} vb="0 0 8 4"><path d="M4 4L7.500 0H.5Z" fill="#444" /></Svg></div>
              </div>
            </div>
          </aside>

          <div className="flex w-[6px] shrink-0 items-center pl-[3px]">
            <svg width="1" height="16" className="block" shapeRendering="crispEdges">{[0, 3, 6, 9, 12, 15].map((y) => <rect key={y} x="0" y={y} width="1" height="1" fill="#aaa" />)}</svg>
          </div>

          <main className="flex w-[482px] flex-col">
            <svg width="482" height="493" viewBox="537 151 482 493" className="block shrink-0">
              <defs><linearGradient id="sky" x1="0" y1="0" x2="0" y2="1"><stop offset="0" stopColor="#55a8ff" /><stop offset=".5" stopColor="#59ade2" /><stop offset="1" stopColor="#5696ae" /></linearGradient></defs>
              <rect x="537" y="151" width="482" height="493" fill="url(#sky)" />
              <Board />
              <NavCube />
              <MiniAxes />
            </svg>
            <div className="flex h-[31px] items-start">
              <div className="flex h-[31px] w-[152px] items-center rounded-b-[3px] border border-t-0 border-[#b0b0b0] bg-gradient-to-b from-[#f1f1f1] to-[#fafafa] pl-[11px]">
                <DocIcon /><span className="w-[94px] whitespace-nowrap pt-0.5 pl-1">Unnamed : 1*</span>
                <Svg w={13} h={13} vb="0 0 13 13"><path d="M1 1.500C4 1 6 6 12 11.500M12 1C8 3 4 8 1 12" fill="none" stroke="#222" strokeWidth="2.200" /></Svg>
              </div>
              <div className="mt-px h-px flex-1 bg-[#b0b0b0]" />
            </div>
          </main>
        </div>

        <footer className="flex h-[30px] shrink-0 items-center whitespace-nowrap pt-0.5">
          <div className="w-[691px] pl-[2px]">Valid, Nombre interno: rpi_picow_r3_2_brd</div>
          <Svg><path d="M.5 .5H15.500V15.500H.5Z" fill="#f5f5f5" stroke="#c2c2c2" /><path d="M3 3.500H13.500V13.500H3Z" fill="#2b5797" stroke="#142f5a" strokeWidth=".8" /><path d="M3 3.500L8 6.500L13.500 3.500" fill="#5383bf" /></Svg>
          <div className="pl-3"><Svg w={6} h={4} vb="0 0 6 4"><path d="M.5 .5H5.500L3 3.500Z" fill="#666" /></Svg></div>
          <div className="pl-6"><Svg w={10} h={14} vb="0 0 10 14"><rect x="1" y="1" width="8" height="12" rx="3.500" fill="#f4f4f4" stroke="#333" strokeWidth="1.500" /><path d="M5 1V5M3.500 3.500V6H6.500V3.500" fill="none" stroke="#333" /></Svg></div>
          <span className="w-[61px] pl-[5px]">Blender</span>
          <Svg w={6} h={4} vb="0 0 6 4"><path d="M.5 .5H5.500L3 3.500Z" fill="#666" /></Svg>
          <span className="w-[158px] pb-px pl-[15px]">57,81 mm x 56,52 mm</span>
          <Svg w={6} h={4} vb="0 0 6 4"><path d="M.5 .5H5.500L3 3.500Z" fill="#666" /></Svg>
          <svg width="12" height="12" viewBox="0 0 12 12" className="ml-auto mt-auto block" shapeRendering="crispEdges">
            {[[9, 0], [6, 3], [9, 3], [3, 6], [6, 6], [9, 6], [0, 9], [3, 9], [6, 9], [9, 9]].map(([x, y]) => <rect key={x + "-" + y} x={x} y={y} width="1" height="1" fill="#aaa" />)}
          </svg>
        </footer>
      </div>
    </div>
  );
}
